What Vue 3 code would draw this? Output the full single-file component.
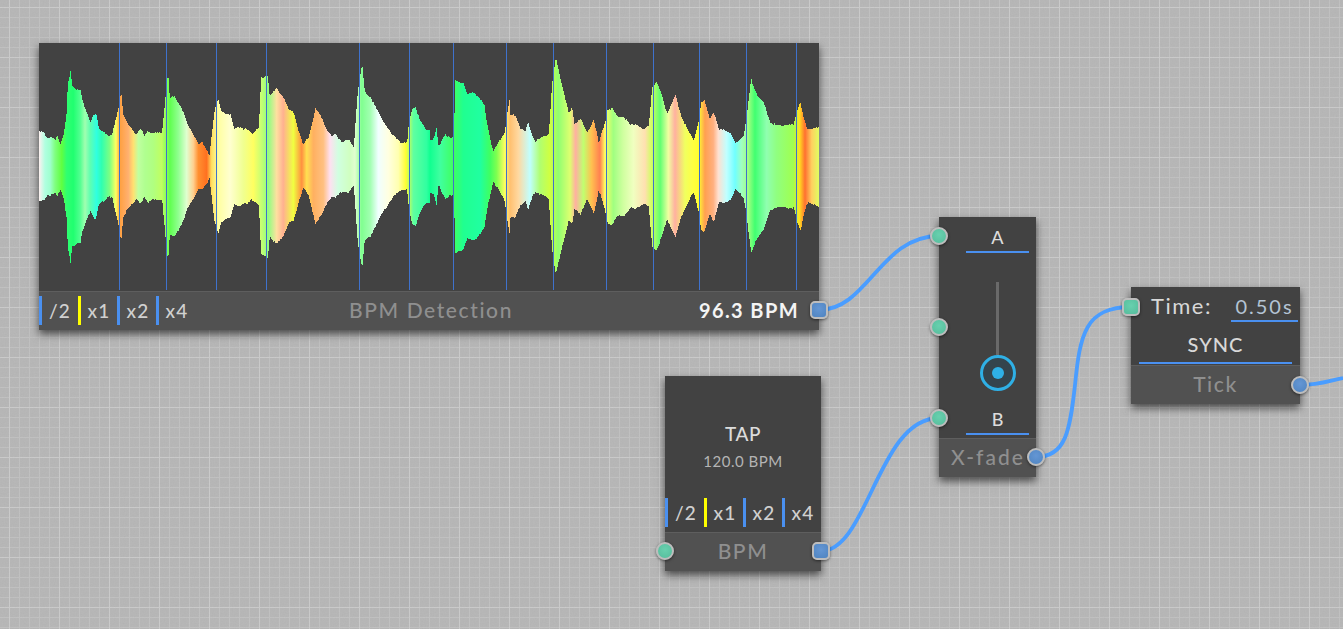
<script setup>
// envelope points read off the waveform: [x, top] with top relative to y=35, scaled 3x
const left = [[27,288],[40,290],[50,310],[60,308],[75,312],[80,300],[90,325],[100,300],[108,240],[112,150],[120,105],[125,150],[140,165],[150,165],[155,195],[170,235],[180,262],[190,240],[197,237],[205,280],[220,290],[235,305],[245,300],[255,255],[265,215],[272,170],[278,240],[290,265],[305,280],[318,300],[330,282],[342,300],[352,285],[365,298],[380,292],[395,290],[400,240],[408,150],[413,115],[418,190],[432,182],[445,205],[460,235],[470,265],[490,300],[505,330],[515,322],[530,345],[537,360],[545,290],[553,225],[563,190],[572,225],[590,240],[600,240],[612,280],[625,275],[640,285],[650,280],[665,295],[685,280],[692,130],[712,120],[718,185],[730,170],[740,160],[760,190],[775,225],[790,230],[805,290],[818,330],[835,305],[855,222],[875,250],[890,285],[905,305],[915,298],[935,320],[955,315],[970,335],[982,165],[995,88],[1003,170],[1020,185],[1040,225],[1060,260],[1085,300],[1098,310],[1115,325],[1130,325],[1135,265],[1145,220],[1155,215],[1170,260],[1185,280],[1199,285]]
const right = [[0,315],[10,312],[18,280],[25,340],[35,310],[45,298],[60,310],[70,305],[75,133],[100,148],[110,178],[130,170],[150,195],[162,210],[170,265],[188,350],[205,322],[222,292],[230,240],[237,195],[240,240],[255,240],[270,280],[285,290],[293,262],[305,300],[315,318],[340,305],[355,295],[365,145],[376,70],[395,150],[415,235],[425,220],[432,265],[450,252],[470,295],[490,252],[505,325],[525,255],[530,225],[545,220],[560,245],[580,245],[600,270],[615,265],[640,285],[655,270],[665,155],[678,142],[695,185],[710,235],[735,182],[755,250],[780,300],[790,315],[805,255],[812,205],[822,198],[838,250],[850,230],[865,285],[880,282],[900,295],[915,325],[940,300],[948,250],[962,133],[980,180],[1000,205],[1020,262],[1040,272],[1065,270],[1090,270],[1100,225],[1110,200],[1120,250],[1130,285],[1150,278],[1167,275]]

const colLeft = [[27,'#fff0f0'],[45,'#b0ffe0'],[60,'#a0ffd0'],[75,'#80ff80'],[95,'#60ff40'],[110,'#30ff70'],[130,'#20ff70'],[150,'#50ff90'],[165,'#a0ffb0'],[180,'#60ffb0'],[200,'#30ffe0'],[215,'#30ffb0'],[240,'#80ff80'],[258,'#ffff60'],[270,'#ffa040'],[295,'#ffb070'],[310,'#ffe070'],[325,'#c0ffa0'],[345,'#b0ff90'],[370,'#b0ff80'],[395,'#c0ff60'],[420,'#60ff50'],[445,'#90ff90'],[470,'#e0ffd0'],[490,'#ffd090'],[505,'#ff9030'],[530,'#ff7020'],[545,'#ffe060'],[565,'#ffffa0'],[600,'#ffffd0'],[640,'#f0ff90'],[670,'#ffff60'],[690,'#d0ff70'],[715,'#90ff80'],[740,'#ffe0a0'],[760,'#ffb090'],[790,'#f0ff40'],[815,'#ff9040'],[830,'#ffe050'],[850,'#ffb060'],[880,'#ffc080'],[900,'#ffe0f0'],[925,'#d0ffe0'],[960,'#d0ffc0'],[975,'#e0ffd0'],[995,'#80ff90'],[1020,'#a0ffb0'],[1045,'#f0ffff'],[1075,'#ffffe0'],[1105,'#ffffb0'],[1128,'#ffff30'],[1150,'#60ffa0'],[1190,'#30ffa0']]
const colRight = [[0,'#10ff90'],[30,'#40ffa0'],[70,'#40ff60'],[100,'#20ff90'],[150,'#20ffa0'],[180,'#40ff60'],[200,'#80ff50'],[225,'#ffff60'],[240,'#ffc070'],[265,'#ffd8a0'],[300,'#c0ffff'],[330,'#b0ff70'],[360,'#d0ff40'],[385,'#90ff70'],[420,'#ddff70'],[437,'#ffb0a0'],[460,'#c0ff70'],[485,'#ffc050'],[510,'#ff8050'],[525,'#ffff60'],[550,'#a0ff80'],[580,'#d0ffa0'],[610,'#f0ffc0'],[645,'#ffe0b0'],[665,'#d0ff60'],[690,'#60ff70'],[715,'#f0ffa0'],[735,'#ffb0a0'],[765,'#f0ff60'],[790,'#ffff40'],[805,'#ffff30'],[825,'#ffa050'],[850,'#ffb080'],[865,'#ffe0d0'],[890,'#c0ffff'],[915,'#70ffff'],[935,'#a0ffc0'],[955,'#a0ff80'],[975,'#40ff70'],[1010,'#90ffb0'],[1040,'#90ff80'],[1090,'#a0ff50'],[1108,'#ffe020'],[1125,'#ff7030'],[1145,'#ffd060'],[1167,'#e0ff60']]

// node-local coords: waveform box starts at page x=39, y=43
const WAVE_W = 780
const toX = (zx, base) => base + zx / 3 - 39
const toY = zy => (35 + zy / 3) - 43
const env = [
  ...left.map(p => [toX(p[0], 30), toY(p[1])]),
  ...right.filter(p => toX(p[0], 430) > toX(1199, 30)).map(p => [toX(p[0], 430), toY(p[1])]),
]
const CENTER = toY(394)

// one column per pixel, with a little repeatable wobble so the edge steps like the real waveform
const wobble = x => Math.sin(x * 12.9898) * 43758.5453 % 1
function columnTop(x) {
  let i = 0
  while (i < env.length - 2 && env[i + 1][0] < x) i++
  const [x0, y0] = env[i]
  const [x1, y1] = env[i + 1]
  return y0 + (y1 - y0) * Math.min(1, Math.max(0, (x - x0) / (x1 - x0)))
}
const upper = []
const lower = []
for (let x = 0; x < WAVE_W; x++) {
  const y = columnTop(x)
  const half = CENTER - y
  const up = Math.round(CENTER - half + wobble(x))
  const down = Math.round(CENTER + half + wobble(x + 500))
  upper.push(`${x},${up}`, `${x + 1},${up}`)
  lower.unshift(`${x + 1},${down}`, `${x},${down}`)
}
const wavePoints = [...upper, ...lower].join(' ')

const stops = [
  ...colLeft.map(c => [toX(c[0], 30), c[1]]),
  ...colRight.map(c => [toX(c[0], 430), c[1]]),
].map(s => ({ off: ((s[0] / WAVE_W) * 100).toFixed(2) + '%', color: s[1] }))

const beats = [119, 166, 216, 266, 359, 409, 453, 506, 553, 606, 653, 699, 746, 796].map(x => x - 39)

const multipliers = [
  { label: '/2', active: false },
  { label: 'x1', active: true },
  { label: 'x2', active: false },
  { label: 'x4', active: false },
]

const wires = [
  'M819 310 C868 310 880 236 939 236',
  'M821 551 C868 551 878 418 939 418',
  'M1036 457 C1066 457 1070 430 1075 385 C1080 335 1085 307 1131 307',
  'M1300 385 C1320 385 1328 381 1343 378',
]
</script>

<template>
  <div class="canvas">
    <svg class="noise" width="1343" height="629">
      <filter id="grain"><feTurbulence type="fractalNoise" baseFrequency="0.9" numOctaves="2" seed="3" /><feColorMatrix type="saturate" values="0" /></filter>
      <rect width="1343" height="629" filter="url(#grain)" opacity="0.07" />
    </svg>

    <svg class="wires" width="1343" height="629">
      <path v-for="d in wires" :key="d" :d="d" />
    </svg>

    <!-- BPM detection -->
    <div class="node detect">
      <div class="body wave">
        <svg width="780" height="247" class="wave-svg">
          <defs>
            <linearGradient id="spectrum" x1="0" y1="0" x2="780" y2="0" gradientUnits="userSpaceOnUse">
              <stop v-for="s in stops" :key="s.off" :offset="s.off" :stop-color="s.color" />
            </linearGradient>
          </defs>
          <polygon :points="wavePoints" fill="url(#spectrum)" />
          <rect v-for="x in beats" :key="x" :x="x" y="0" width="1" height="247" fill="#3f72cc" />
        </svg>
      </div>
      <div class="foot detect-foot">
        <div class="mults">
          <span v-for="m in multipliers" :key="m.label" class="mult" :class="{ active: m.active }">{{ m.label }}</span>
        </div>
        <span class="foot-title detect-title">BPM Detection</span>
        <span class="bpm">96.3 BPM</span>
      </div>
      <i class="port square out" style="top: 258px" />
    </div>

    <!-- Tap -->
    <div class="node tap">
      <div class="body tap-body">
        <div class="tap-main">
          <div class="tap-label">TAP</div>
          <div class="tap-value">120.0 BPM</div>
        </div>
        <div class="mults tap-mults">
          <span v-for="m in multipliers" :key="m.label" class="mult" :class="{ active: m.active }">{{ m.label }}</span>
        </div>
      </div>
      <div class="foot"><span class="foot-title">BPM</span></div>
      <i class="port round in" style="top: 166px" />
      <i class="port square out" style="top: 166px" />
    </div>

    <!-- X-fade -->
    <div class="node xfade">
      <div class="body xfade-body">
        <div class="x-label">A</div>
        <div class="slider">
          <div class="track" />
          <div class="knob"><div class="dot" /></div>
        </div>
        <div class="x-label">B</div>
      </div>
      <div class="foot xfade-foot"><span class="foot-title">X-fade</span></div>
      <i class="port round in" style="top: 10px" />
      <i class="port round in" style="top: 101px" />
      <i class="port round in" style="top: 192px" />
      <i class="port round out blue" style="top: 231px" />
    </div>

    <!-- Tick -->
    <div class="node tick">
      <div class="body tick-body">
        <div class="time-row">
          <span class="time-label">Time:</span>
          <span class="time-value">0.50s</span>
        </div>
        <div class="sync">SYNC</div>
      </div>
      <div class="foot tick-foot"><span class="foot-title">Tick</span></div>
      <i class="port square in" style="top: 11px" />
      <i class="port round out blue" style="top: 89px" />
    </div>
  </div>
</template>

<style>
body {
  margin: 0;
  overflow: hidden;
}
</style>

<style scoped>
.canvas {
  position: relative;
  width: 1343px;
  height: 629px;
  overflow: hidden;
  font-family: Lato, "Open Sans", sans-serif;
  background-color: #b6b6b6;
  background-image:
    linear-gradient(to right, #cacaca 1px, transparent 1px),
    linear-gradient(to bottom, #cacaca 1px, transparent 1px),
    linear-gradient(to right, #c0c0c0 1px, transparent 1px),
    linear-gradient(to bottom, #c0c0c0 1px, transparent 1px);
  background-size: 50px 50px, 50px 50px, 10px 10px, 10px 10px;
  background-position: 9px 0, 0 7px, 9px 0, 0 7px;
}
.noise, .wires {
  position: absolute;
  left: 0;
  top: 0;
}
.wires path {
  fill: none;
  stroke: #4a9dff;
  stroke-width: 3.8;
}
.node {
  position: absolute;
  display: flex;
  flex-direction: column;
  background: #424242;
  box-shadow: 0 4px 8px rgba(0, 0, 0, 0.6);
}
.detect { left: 39px; top: 43px; width: 780px; height: 287px; }
.tap { left: 665px; top: 376px; width: 156px; height: 195px; }
.xfade { left: 939px; top: 217px; width: 97px; height: 260px; }
.tick { left: 1131px; top: 287px; width: 169px; height: 117px; }

.body {
  flex: 1;
  min-height: 0;
}
.wave-svg {
  display: block;
  shape-rendering: crispEdges;
}
.foot {
  position: relative;
  height: 39px;
  flex: none;
  display: flex;
  align-items: center;
  justify-content: center;
  box-sizing: border-box;
  padding-bottom: 3px;
  background: #515151;
  border-top: 1px solid #5e5e5e;
}
.foot-title {
  font-size: 21px;
  font-weight: 500;
  letter-spacing: 1.6px;
  color: #8f8f8f;
}
.detect-foot {
  justify-content: space-between;
  padding-right: 20px;
}
.detect-title {
  position: absolute;
  left: 310px;
}
.bpm {
  font-size: 20px;
  font-weight: 700;
  letter-spacing: 1.4px;
  color: #f4f4f4;
}
.mults {
  display: flex;
  height: 29px;
}
.detect-foot .mults {
  margin-top: 2px;
}
.mult {
  display: flex;
  align-items: center;
  justify-content: center;
  box-sizing: border-box;
  width: 39px;
  border-left: 3px solid #4a90f0;
  font-size: 19px;
  font-weight: 500;
  letter-spacing: 1.2px;
  color: #d0d0d0;
}
.mult.active {
  border-left-color: #ffff00;
}

.tap-body {
  display: flex;
  flex-direction: column;
}
.tap-main {
  flex: 1;
  display: flex;
  flex-direction: column;
  align-items: center;
  justify-content: center;
  padding-top: 18px;
}
.tap-label {
  font-size: 19px;
  font-weight: 500;
  letter-spacing: 0.5px;
  color: #dcdcdc;
}
.tap-value {
  margin-top: 7px;
  font-size: 15px;
  letter-spacing: 0.5px;
  color: #b4b4b4;
}
.tap-mults {
  margin-bottom: 5px;
}

.xfade-body {
  display: flex;
  flex-direction: column;
  align-items: center;
  padding: 0 7px 3px 27px;
}
.x-label {
  align-self: stretch;
  height: 24px;
  margin-top: 10px;
  text-align: center;
  font-size: 18px;
  font-weight: 500;
  line-height: 20px;
  color: #dcdcdc;
  border-bottom: 2px solid #4a90f0;
}
.slider {
  position: relative;
  flex: 1;
  width: 36px;
}
.track {
  position: absolute;
  left: 16px;
  top: 29px;
  width: 3px;
  height: 73px;
  background: #6a6a6a;
}
.knob {
  position: absolute;
  left: 0;
  top: 102px;
  width: 36px;
  height: 36px;
  box-sizing: border-box;
  border: 3px solid #2fb0e6;
  border-radius: 50%;
  background: #34444d;
  display: flex;
  align-items: center;
  justify-content: center;
}
.dot {
  width: 12px;
  height: 12px;
  border-radius: 50%;
  background: #2fb0e6;
}
.xfade-foot {
  justify-content: flex-start;
  padding-left: 12px;
}
.xfade-foot .foot-title {
  letter-spacing: 2px;
}

.tick-body {
  padding: 0 8px;
}
.time-row {
  display: flex;
  justify-content: space-between;
  height: 36px;
  padding-left: 12px;
  align-items: center;
  font-size: 22px;
  letter-spacing: 1.5px;
}
.time-label {
  color: #d8d8d8;
}
.time-value {
  width: 67px;
  box-sizing: border-box;
  height: 29px;
  line-height: 26px;
  margin-top: 5px;
  margin-right: -6px;
  text-align: center;
  font-size: 20px;
  letter-spacing: 2px;
  color: #b4c4d4;
  border-bottom: 2px solid #4a90f0;
}
.sync {
  height: 36px;
  margin-top: 3px;
  line-height: 36px;
  text-align: center;
  font-size: 20px;
  font-weight: 500;
  letter-spacing: 1px;
  color: #d8d8d8;
  border-bottom: 2px solid #4a90f0;
}

.port {
  position: absolute;
  width: 18px;
  height: 18px;
  box-sizing: border-box;
  border: 2.5px solid #bdbdbd;
  box-shadow: 0 1px 3px rgba(0, 0, 0, 0.5);
  background: radial-gradient(circle at 50% 40%, #68d0ae, #55bc9c);
}
.port.round { border-radius: 50%; }
.port.square {
  border-radius: 5px;
}
.port.in { left: -9px; }
.port.out { right: -9px; }
.port.out, .port.blue {
  background: radial-gradient(circle at 50% 40%, #6496d4, #4f84c0);
}
.port.square.in {
  background: radial-gradient(circle at 50% 40%, #68d0ae, #55bc9c);
}
</style>
